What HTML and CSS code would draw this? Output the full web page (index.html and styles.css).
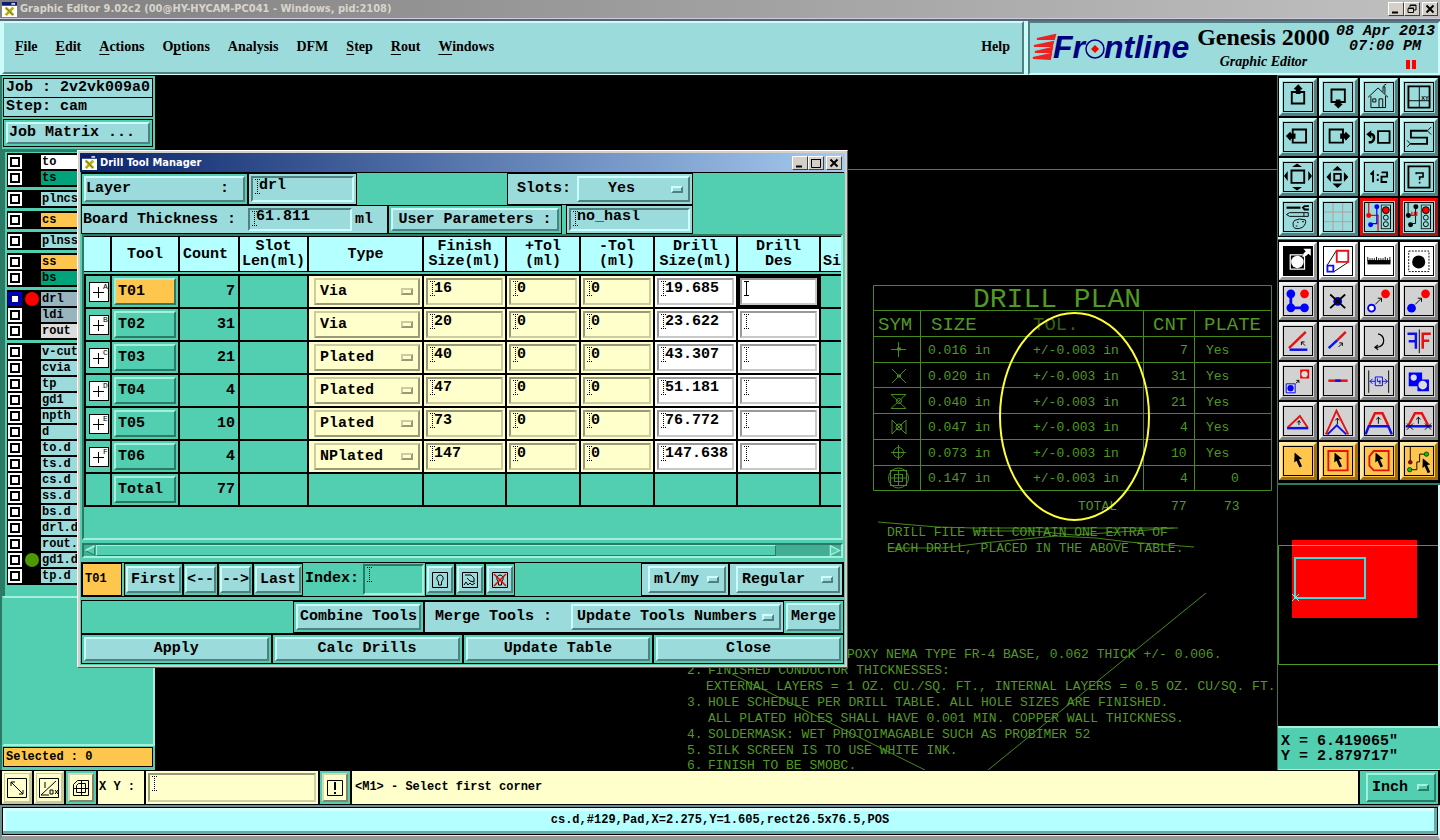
FILE: index.html
```html
<!DOCTYPE html>
<html lang="en">
<head>
<meta charset="utf-8">
<title>Graphic Editor 9.02c2</title>
<link rel="stylesheet" href="styles.css">
</head>
<body>
<svg class="defs" aria-hidden="true">
  <defs>
    <symbol id="app" viewBox="0 0 16 16"><rect width="16" height="16" fill="#fff"/><rect width="16" height="4" fill="#0a1a70"/><path d="M10 1h4v2h-4z" fill="#ccc"/><path d="M4 6l8 8M12 6l-8 8" stroke="#b8b000" stroke-width="3"/><path d="M4 6l8 8" stroke="#666" stroke-width="1"/></symbol>
    <symbol id="cursor" viewBox="0 0 30 52"><path d="M2 0l24 20-10 2 10 22-8 4-10-22-7 6z" fill="#000"/></symbol>
    <symbol id="light" viewBox="0 0 32 80"><rect x="1" y="1" width="30" height="77" fill="none" stroke="#000" stroke-width="3"/><circle cx="16" cy="18" r="11" fill="#f00" stroke="#000" stroke-width="3"/><circle cx="16" cy="42" r="8" fill="none" stroke="#000" stroke-width="3"/><circle cx="16" cy="63" r="8" fill="none" stroke="#000" stroke-width="3"/></symbol>
    <symbol id="cross" viewBox="0 0 20 20"><rect x=".5" y=".5" width="19" height="19" fill="#fff" stroke="#000"/><path d="M4 10.500h11M9.500 5v11" stroke="#000"/></symbol>
  </defs>
</svg>

<header class="titlebar">
  <svg class="app-icon"><use href="#app"/></svg>
  <h1>Graphic Editor 9.02c2 (00@HY-HYCAM-PC041 - Windows, pid:2108)</h1>
  <div class="winbtns">
    <button aria-label="Minimize"><svg viewBox="0 0 12 10"><path d="M2 8.500h6" stroke="#000" stroke-width="2"/></svg></button>
    <button aria-label="Restore"><svg viewBox="0 0 12 10"><path d="M4 3V1h6v5H8M4 1.500h6M2 4.500h5.500v4H2zM2 4h6" fill="none" stroke="#000"/></svg></button>
    <button class="x" aria-label="Close window"><svg viewBox="0 0 12 10"><path d="M2.500 1.500l7 7M9.500 1.500l-7 7" stroke="#000" stroke-width="2"/></svg></button>
  </div>
</header>

<div class="top">
  <nav class="menubar">
    <button><u>F</u>ile</button><button><u>E</u>dit</button><button><u>A</u>ctions</button><button>O<u>p</u>tions</button><button>Analysis</button><button>DFM</button><button><u>S</u>tep</button><button><u>R</u>out</button><button><u>W</u>indows</button>
    <button class="help">Help</button>
  </nav>
  <div class="brand">
    <svg class="logo" viewBox="0 0 160 40" role="img" aria-label="Frontline">
      <path d="M22 8L4 12l17 0zM20 15L1 19l18 0zM19 21L2 25l16 0zM18 27L0 31l17 1z" fill="#e22" stroke="#e22" stroke-width="2"/>
      <text x="20" y="31">Fr</text><text x="71" y="31">ntline</text>
      <circle cx="62" cy="22" r="9" fill="none" stroke="#000080" stroke-width="1.500"/><path d="M62 18l4 4-4 4-4-4z" fill="#f00"/>
    </svg>
    <div class="product"><strong>Genesis 2000</strong><em>Graphic Editor</em></div>
    <div class="clock"><time>08 Apr 2013</time><time class="hour">07:00 PM</time><span class="pause"></span></div>
  </div>
</div>

<main class="main">
  <aside class="side">
    <section class="job">
      <p>Job : 2v2vk009a0</p>
      <p>Step: cam</p>
      <div class="matrix"><button>Job Matrix ...</button></div>
    </section>
    <section class="layers">
      <div class="grp"><label class="w"><input type="checkbox"><i></i>to</label><label class="g"><input type="checkbox"><i></i>ts</label></div>
      <div class="grp"><label><input type="checkbox"><i></i>plncs</label></div>
      <div class="grp"><label class="o"><input type="checkbox"><i></i>cs</label></div>
      <div class="grp"><label><input type="checkbox"><i></i>plnss</label></div>
      <div class="grp"><label class="o"><input type="checkbox"><i></i>ss</label><label class="g"><input type="checkbox"><i></i>bs</label></div>
      <div class="grp"><label class="s"><input type="checkbox" checked><i class="red"></i>drl</label><label class="s"><input type="checkbox"><i></i>ldi</label><label class="l"><input type="checkbox"><i></i>rout</label></div>
      <div class="grp"><label><input type="checkbox"><i></i>v-cut</label><label><input type="checkbox"><i></i>cvia</label><label><input type="checkbox"><i></i>tp</label><label><input type="checkbox"><i></i>gd1</label><label><input type="checkbox"><i></i>npth</label><label><input type="checkbox"><i></i>d</label><label><input type="checkbox"><i></i>to.d</label><label><input type="checkbox"><i></i>ts.d</label><label><input type="checkbox"><i></i>cs.d</label><label><input type="checkbox"><i></i>ss.d</label><label><input type="checkbox"><i></i>bs.d</label><label><input type="checkbox"><i></i>drl.d</label><label><input type="checkbox"><i></i>rout.d</label><label><input type="checkbox"><i class="green"></i>gd1.d</label><label><input type="checkbox"><i></i>tp.d</label></div>
    </section>
    <div class="blank"></div>
    <p class="selected">Selected : 0</p>
  </aside>

  <svg class="canvas" role="img" aria-label="Drill plan drawing">
    <g transform="translate(-155 -75)">
      <g class="ln">
        <path d="M155 169.500H1280"/>
        <path d="M873.500 285.500h398v205h-398zM873 310.500h399M873 336.500h399M873 362.500h399M873 387.500h399M873 413.500h399M873 439.500h399M873 465.500h399M920.500 310v180M1143.500 310v180M1194.500 310v180"/>
        <path d="M891 349.500h15M898.500 342v15M892 369l14 14M906 369l-14 14"/>
        <path d="M897 376h4M897 349h4" stroke-width="3"/>
        <path d="M891 394.500h15l-15 14h15zM892 420v14l14-14v14z"/>
        <circle cx="899" cy="401" r="2.500"/><circle cx="899" cy="427" r="3"/><circle cx="898.500" cy="452.500" r="5"/>
        <path d="M891 452.500h15M898.500 445v15"/>
        <circle cx="898.500" cy="478" r="10"/><rect x="890.500" y="470.500" width="16" height="15"/><rect x="894.500" y="474.500" width="8" height="7"/><path d="M891 478h15M898.500 471v14"/>
        <path d="M878 522L937 527 973 528H1178M974 531h60l40 4 60-4 40-3M888 548h55l40-5 73-7 40 2 33 4 65 5"/>
        <path d="M1206 593L988 770M732 674l193 96"/>
      </g>
      <text class="t28" x="973" y="307">DRILL PLAN</text>
      <g class="t20"><text x="878" y="330">SYM</text><text x="931" y="330">SIZE</text><text class="dim" x="1033" y="330">TOL.</text><text x="1153" y="330">CNT</text><text x="1204" y="330">PLATE</text></g>
      <g class="t13">
        <text x="928" y="354">0.016 in</text><text x="1033" y="354">+/-0.003 in</text><text x="1180" y="354">7</text><text x="1206" y="354">Yes</text>
        <text x="928" y="380">0.020 in</text><text x="1033" y="380">+/-0.003 in</text><text x="1171" y="380">31</text><text x="1206" y="380">Yes</text>
        <text x="928" y="406">0.040 in</text><text x="1033" y="406">+/-0.003 in</text><text x="1171" y="406">21</text><text x="1206" y="406">Yes</text>
        <text x="928" y="431">0.047 in</text><text x="1033" y="431">+/-0.003 in</text><text x="1180" y="431">4</text><text x="1206" y="431">Yes</text>
        <text x="928" y="457">0.073 in</text><text x="1033" y="457">+/-0.003 in</text><text x="1171" y="457">10</text><text x="1206" y="457">Yes</text>
        <text x="928" y="482">0.147 in</text><text x="1033" y="482">+/-0.003 in</text><text x="1180" y="482">4</text><text x="1231" y="482">0</text>
        <text x="1078" y="510">TOTAL</text><text x="1171" y="510">77</text><text x="1224" y="510">73</text>
        <text x="887" y="536">DRILL FILE WILL CONTAIN ONE EXTRA OF</text>
        <text x="887" y="552">EACH DRILL, PLACED IN THE ABOVE TABLE.</text>
        <text x="847" y="658">POXY NEMA TYPE FR-4 BASE, 0.062 THICK +/- 0.006.</text>
        <text x="687" y="674">2.</text><text x="708" y="674">FINISHED CONDUCTOR THICKNESSES:</text>
        <text x="706" y="690">EXTERNAL LAYERS = 1 OZ. CU./SQ. FT., INTERNAL LAYERS = 0.5 OZ. CU/SQ. FT.</text>
        <text x="687" y="706">3.</text><text x="708" y="706">HOLE SCHEDULE PER DRILL TABLE. ALL HOLE SIZES ARE FINISHED.</text>
        <text x="708" y="722">ALL PLATED HOLES SHALL HAVE 0.001 MIN. COPPER WALL THICKNESS.</text>
        <text x="687" y="738">4.</text><text x="708" y="738">SOLDERMASK: WET PHOTOIMAGABLE SUCH AS PROBIMER 52</text>
        <text x="687" y="754">5.</text><text x="708" y="754">SILK SCREEN IS TO USE WHITE INK.</text>
        <text x="687" y="769">6.</text><text x="708" y="769">FINISH TO BE SMOBC.</text>
      </g>
      <ellipse cx="1074.500" cy="416.500" rx="74.500" ry="103.500" fill="none" stroke="#ffff33" stroke-width="2"/>
    </g>
  </svg>

  <aside class="tools">
    <div class="pad">
      <button aria-label="Pan up"><svg viewBox="0 0 90 90"><path d="M25 29h40v37H25z" class="k6"/><path d="M46 4l14 15-7 3v13H38V22l-7-3z"/></svg></button>
      <button aria-label="Pan down"><svg viewBox="0 0 90 90"><path d="M24 21h43v40H24z" class="k6"/><path d="M46 82L32 68l6-4V53h15v11l7 4z"/></svg></button>
      <button aria-label="Home"><svg viewBox="0 0 90 90"><path d="M10 46l32-30 32 30M19 42v37h47V42M45 79V51h12v28M25 51h10v10H25zM58 28V12h6v22M60 8l8-4" class="k3"/></svg></button>
      <button aria-label="Zoom area"><svg viewBox="0 0 90 90"><path d="M11 11h68v68H11z" class="k6"/><path d="M46 12v66M12 57h66" class="k3"/><text x="52" y="54">XY</text></svg></button>
      <button aria-label="Pan left"><svg viewBox="0 0 90 90"><path d="M28 21h43v42H28z" class="k6"/><path d="M6 42l14-14 3 6h14v17H23l-3 6z"/></svg></button>
      <button aria-label="Pan right"><svg viewBox="0 0 90 90"><path d="M18 21h43v42H18z" class="k6"/><path d="M84 42L70 28l-3 6H52v17h15l3 6z"/></svg></button>
      <button aria-label="Previous view"><svg viewBox="0 0 90 90"><path d="M42 26h37v38H42z" class="k6"/><path d="M14 36h8q7 2 7 12t-10 14H12" fill="none" stroke="#000" stroke-width="8"/><path d="M4 36l16-13v27z"/></svg></button>
      <button aria-label="Route view"><svg viewBox="0 0 90 90"><path d="M72 25H19v22h52v20H17" class="k6"/><path d="M72 25l12-12M72 25l12 12M17 67L7 56M17 67L7 77" class="k3"/></svg></button>
      <button aria-label="Zoom out"><svg viewBox="0 0 90 90"><path d="M24 24h41v40H24z" class="k6"/><path d="M42 2l16 11H26zM42 88l16-11H26zM0 42l12-16v32zM90 42L78 26v32z"/></svg></button>
      <button aria-label="Zoom in"><svg viewBox="0 0 90 90"><path d="M33 35h21v21H33z" class="k6"/><path d="M43 10l16 14H27zM43 80l16-14H27zM8 45l14-16v32zM78 45L64 29v32z"/></svg></button>
      <button aria-label="Scale one to two"><svg viewBox="0 0 90 90"><path d="M18 37l8-8v33M53 30h18v14H53v17h18M41 35v7M41 51v7" class="k6"/></svg></button>
      <button aria-label="Help on tool"><svg viewBox="0 0 90 90"><path d="M11 11h68v68H11z" class="k6"/><path d="M36 36v-4h22v13H47v10M47 60v6" class="k5"/></svg></button>
      <button aria-label="Settings"><svg viewBox="0 0 90 90"><path d="M8 15h45" stroke="#000" stroke-width="7"/><path d="M80 10H66l-5 5 5 6h14" class="k6"/><path d="M8 37l10-6h60v12H18zM64 31v12" class="k3"/><path d="M34 56q14-8 34-2 6 10-8 24-22 10-30-2-4-14 4-20zM58 60h6M42 62h5M38 74h5" class="k3"/></svg></button>
      <button aria-label="Grid"><svg viewBox="0 0 90 90"><path d="M29 0v90M60 0v90M0 29h90M0 60h90" fill="none" stroke="#b99" stroke-width="3"/></svg></button>
      <button class="hot" aria-label="Connected nets"><svg viewBox="0 0 90 90"><path d="M12 0v40h30v50" fill="none" stroke="#f00" stroke-width="4"/><path d="M38 12v54H20" fill="none" stroke="#00f" stroke-width="4"/><circle cx="38" cy="12" r="8" fill="#00f"/><circle cx="18" cy="70" r="8" fill="#00f"/><circle cx="12" cy="40" r="8" fill="#f00"/><use href="#light" x="50" y="5" width="34" height="80"/></svg></button>
      <button class="hot" aria-label="Net check"><svg viewBox="0 0 90 90"><path d="M10 0v40M34 12v54H20" class="k3"/><path d="M10 40h28M22 40V28M30 40V28M38 40V28" fill="none" stroke="#f00" stroke-width="4"/><circle cx="35" cy="12" r="8"/><circle cx="18" cy="70" r="8"/><circle cx="11" cy="40" r="8"/><use href="#light" x="50" y="5" width="34" height="80"/></svg></button>
    </div>
    <div class="pad gray">
      <button class="white" aria-label="Negative move"><svg viewBox="0 0 90 90"><path d="M0 0h90v90H0z"/><path d="M20 25h46v46H20zM60 32l20-22" fill="none" stroke="#fff" stroke-width="4"/><circle cx="43" cy="48" r="20" fill="#fff"/><path d="M62 6h24v22l-8-6-8 8-8-8 8-8z" fill="#fff"/></svg></button>
      <button class="white" aria-label="Resize"><svg viewBox="0 0 90 90"><path d="M10 59L40 11M31 80l47-31" class="k2"/><path d="M41 12h37v36H41z" class="r"/><path d="M11 60h19v19H11z" class="b"/></svg></button>
      <button class="white" aria-label="Measure"><svg viewBox="0 0 90 90"><path d="M8 42h74v14H8z"/><path d="M9 46V32M16 46V36M23 46V36M30 46V36M37 46V32M44 46V36M51 46V36M58 46V36M65 46V32M72 46V36M80 46V32" class="k3"/></svg></button>
      <button class="white" aria-label="Select area"><svg viewBox="0 0 90 90"><path d="M12 13h65v66H12z" class="k3" stroke-dasharray="6 4"/><circle cx="44" cy="48" r="21"/></svg></button>
      <button aria-label="Add pads"><svg viewBox="0 0 90 90"><path d="M22 22v45h44" fill="none" stroke="#00f" stroke-width="9"/><g fill="#00f"><circle cx="22" cy="22" r="14"/><circle cx="22" cy="67" r="14"/><circle cx="66" cy="67" r="14"/></g><circle cx="66" cy="22" r="14" fill="#f00"/></svg></button>
      <button aria-label="Delete"><svg viewBox="0 0 90 90"><circle cx="44" cy="46" r="14" fill="#00c"/><path d="M20 24l48 44M68 24L20 68" class="k6"/></svg></button>
      <button aria-label="Move"><svg viewBox="0 0 90 90"><circle cx="66" cy="22" r="14" fill="#f00"/><circle cx="21" cy="68" r="11" fill="#fff" stroke="#00f" stroke-width="6"/><path d="M33 56l20-20M41 36h12v12" class="k3"/></svg></button>
      <button aria-label="Copy"><svg viewBox="0 0 90 90"><circle cx="66" cy="22" r="14" fill="#f00"/><circle cx="21" cy="68" r="14" fill="#00f"/><path d="M33 56l20-20M41 36h12v12" class="k3"/></svg></button>
      <button aria-label="Rotate line"><svg viewBox="0 0 90 90"><path d="M70 16L16 68" class="r7"/><path d="M18 73h57" class="b7"/><path d="M68 60L56 48M56 58V48h10" class="k3"/></svg></button>
      <button aria-label="Extend line"><svg viewBox="0 0 90 90"><path d="M70 16L43 42" class="r7"/><path d="M43 42L15 68" class="b7"/><path d="M47 64l12-12M49 51h10v10" class="k3"/></svg></button>
      <button aria-label="Rotate"><svg viewBox="0 0 90 90"><path d="M42 22q18 4 18 22T36 66M42 58l-10 7 10 8" class="k4"/></svg></button>
      <button aria-label="Mirror"><svg viewBox="0 0 90 90"><path d="M46 8v76" class="k3"/><path d="M8 22h27v48M12 46h22" class="b7"/><path d="M83 22H57v48M78 44H58" class="r7"/></svg></button>
      <button aria-label="Replace symbol"><svg viewBox="0 0 90 90"><path d="M52 8h29v29H52z" fill="#f00"/><circle cx="66" cy="23" r="10" fill="#ddd"/><path d="M7 54h29v29H7z" fill="none" stroke="#00f" stroke-width="3"/><circle cx="21" cy="68" r="10" fill="#00f"/><path d="M38 52l10-8M40 43h8v8" class="k3"/></svg></button>
      <button aria-label="Split line"><svg viewBox="0 0 90 90"><path d="M14 44h62" class="r7"/><path d="M36 44h18" class="b7"/></svg></button>
      <button aria-label="Spacing"><svg viewBox="0 0 90 90"><path d="M12 11v72M76 11v72" class="k3"/><path d="M16 46h17v-14h23v28H33V46M56 46h16M24 38l-8 8 8 8M64 38l8 8-8 8M40 37v10h10M48 42v13" fill="none" stroke="#00f" stroke-width="3"/></svg></button>
      <button aria-label="Merge pads"><svg viewBox="0 0 90 90"><path d="M12 18h43v22h22v38H40V62H12z" fill="#00f"/><circle cx="28" cy="34" r="10" fill="#ddd"/><circle cx="57" cy="58" r="14" fill="#ddd"/></svg></button>
      <button aria-label="Move triangle"><svg viewBox="0 0 90 90"><path d="M12 66l39-37 25 37" class="r"/><path d="M10 68h68" class="b7"/><path d="M48 58V44M42 50l6-6 6 6" class="k3"/></svg></button>
      <button aria-label="Stretch corner"><svg viewBox="0 0 90 90"><path d="M6 88l34-76 38 76" class="r"/><path d="M11 88l30-29 31 29" class="b"/><path d="M43 56V36M36 43l7-7 7 7" class="k3"/></svg></button>
      <button aria-label="Stretch line"><svg viewBox="0 0 90 90"><path d="M14 58l18-38h24l18 38" class="r7"/><path d="M2 88l10-26h63l11 26" class="b7"/><path d="M43 54V33M36 40l7-7 7 7" class="k3"/></svg></button>
      <button aria-label="Trim line"><svg viewBox="0 0 90 90"><path d="M12 58l20-38h22l20 38" class="r7"/><path d="M2 62h84" class="b7"/><path d="M43 54V33M36 40l7-7 7 7M6 53l20 20M26 53L6 73M64 53l20 20M84 53L64 73" class="k3"/></svg></button>
      <button class="orange" aria-label="Select"><svg viewBox="0 0 90 90"><use href="#cursor" x="32" y="18" width="30" height="52"/></svg></button>
      <button class="orange" aria-label="Select rectangle"><svg viewBox="0 0 90 90"><path d="M14 13h62v62H14z" class="r"/><use href="#cursor" x="32" y="18" width="30" height="52"/></svg></button>
      <button class="orange" aria-label="Select polygon"><svg viewBox="0 0 90 90"><path d="M28 13h48v62H28L14 60V30z" class="r"/><use href="#cursor" x="32" y="18" width="30" height="52"/></svg></button>
      <button class="orange" aria-label="Select net"><svg viewBox="0 0 90 90"><path d="M17 0v48M16 73h22V48h9V23h20" class="k3"/><circle cx="17" cy="49" r="6" fill="#b00" stroke="#000" stroke-width="2"/><g fill="#0c0" stroke="#000" stroke-width="2"><circle cx="69" cy="23" r="7"/><circle cx="15" cy="73" r="7"/></g><use href="#cursor" x="55" y="36" width="30" height="52"/></svg></button>
    </div>
    <svg class="map" role="img" aria-label="Overview">
      <rect x="14" y="55" width="125" height="78" fill="#f00"/>
      <path d="M170 60.500H.500V179.500H170" fill="none" stroke="#4f9a20"/><path d="M14 60.500h125" stroke="#f80"/>
      <rect x="17" y="73" width="70" height="40" fill="none" stroke="#3ce0e0" stroke-width="2"/><path d="M14 109l7 7M21 109l-7 7" stroke="#6ff"/>
    </svg>
    <div class="coords"><p>X = 6.419065"</p><p>Y = 2.879717"</p></div>
  </aside>
</main>

<div class="prompt">
  <button class="pb" aria-label="Snap line"><svg viewBox="0 0 20 20"><path d="M.500 .500h19v19H.500zM4 4l12 12M4 8V4h4M12 16h4v-4" fill="none" stroke="#000"/></svg></button>
  <button class="pb" aria-label="Snap ratio"><svg viewBox="0 0 20 20"><path d="M.500 .500h19v19H.500zM2 17L17 3M6 4v6M2 17h8M11 12h3v4h-3zM16 12l3 4M19 12l-3 4" fill="none" stroke="#000"/></svg></button>
  <button class="pb teal" aria-label="Grid snap"><svg viewBox="0 0 20 20"><path d="M2.500 6.500l4-4h11v15h-15zM5.500 7.500l2-2h7v9h-9zM10.500 2v16M2 10.500h16" fill="none" stroke="#000"/></svg></button>
  <label class="xy" for="xy">X Y :</label>
  <span class="field xyf"><input id="xy" type="text"></span>
  <button class="pb teal" aria-label="Interrupt"><svg viewBox="0 0 20 20"><path d="M2.500 2.500h15v15h-15z" fill="none" stroke="#000"/><path d="M10 4v8M10 14v2" stroke="#000" stroke-width="2"/></svg></button>
  <p class="msg">&lt;M1&gt; - Select first corner</p>
  <div class="unit"><span class="opt"><select aria-label="Units"><option>Inch</option></select><i></i></span></div>
</div>
<footer class="status"><p>cs.d,#129,Pad,X=2.275,Y=1.605,rect26.5x76.5,POS</p></footer>

<section class="dialog" role="dialog" aria-label="Drill Tool Manager">
  <header class="dbar">
    <svg class="app-icon"><use href="#app"/></svg>
    <h2>Drill Tool Manager</h2>
    <div class="winbtns">
      <button aria-label="Minimize dialog"><svg viewBox="0 0 12 10"><path d="M2 8.500h6" stroke="#000" stroke-width="2"/></svg></button>
      <button aria-label="Maximize dialog"><svg viewBox="0 0 12 10"><path d="M1.500 1.500h9v8h-9zM1 1.500h10" fill="none" stroke="#000"/></svg></button>
      <button class="x" aria-label="Close dialog"><svg viewBox="0 0 12 10"><path d="M2.500 1.500l7 7M9.500 1.500l-7 7" stroke="#000" stroke-width="2"/></svg></button>
    </div>
  </header>
  <div class="dbody">
    <div class="row r1">
      <div class="box w-layer"><button class="bv spread"><span>Layer</span><span>:</span></button></div>
      <div class="box lt w-in"><span class="field"><input type="text" value="drl" aria-label="Layer name"></span></div>
      <div class="fill"></div>
      <div class="box lt w-slots"><label for="slots">Slots:</label><span class="opt center"><select id="slots"><option>Yes</option></select><i></i></span></div>
    </div>
    <div class="row r2">
      <div class="box lt w-thick"><label for="thick">Board Thickness :</label><span class="field"><input id="thick" type="text" value="61.811"></span><span>ml</span></div>
      <div class="box w-user"><button class="bv">User Parameters :</button></div>
      <div class="box lt w-hasl"><span class="field"><input type="text" value="no_hasl" aria-label="User parameters"></span></div>
    </div>
    <div class="view">
      <table>
        <colgroup><col class="c28"><col class="c68"><col class="c60"><col class="c69"><col class="c115"><col class="c83"><col class="c74"><col class="c74"><col class="c83"><col class="c83"><col class="c83"></colgroup>
        <thead><tr><th></th><th>Tool</th><th class="lft">Count</th><th>Slot<br>Len(ml)</th><th>Type</th><th>Finish<br>Size(ml)</th><th>+Tol<br>(ml)</th><th>-Tol<br>(ml)</th><th>Drill<br>Size(ml)</th><th>Drill<br>Des</th><th class="cut"><br>Si</th></tr></thead>
        <tbody>
          <tr class="gap"><td colspan="11"></td></tr>
          <tr><td><svg class="sym"><use href="#cross"/><text x="14" y="7">A</text></svg></td><td><button class="tl on">T01</button></td><td class="n">7</td><td></td><td class="y"><span class="opt"><select aria-label="T01 type"><option>Via</option></select><i></i></span></td><td class="y"><span class="field"><input value="16" aria-label="T01 finish"></span></td><td class="y"><span class="field"><input value="0" aria-label="T01 plus"></span></td><td class="y"><span class="field"><input value="0" aria-label="T01 minus"></span></td><td class="wh"><span class="field"><input value="19.685" aria-label="T01 drill"></span></td><td class="wh act"><span class="field"><input aria-label="T01 des"></span></td><td></td></tr>
          <tr><td><svg class="sym"><use href="#cross"/><text x="14" y="7">B</text></svg></td><td><button class="tl">T02</button></td><td class="n">31</td><td></td><td class="y"><span class="opt"><select aria-label="T02 type"><option>Via</option></select><i></i></span></td><td class="y"><span class="field"><input value="20" aria-label="T02 finish"></span></td><td class="y"><span class="field"><input value="0" aria-label="T02 plus"></span></td><td class="y"><span class="field"><input value="0" aria-label="T02 minus"></span></td><td class="wh"><span class="field"><input value="23.622" aria-label="T02 drill"></span></td><td class="wh"><span class="field"><input aria-label="T02 des"></span></td><td></td></tr>
          <tr><td><svg class="sym"><use href="#cross"/><text x="14" y="7">C</text></svg></td><td><button class="tl">T03</button></td><td class="n">21</td><td></td><td class="y"><span class="opt"><select aria-label="T03 type"><option>Plated</option></select><i></i></span></td><td class="y"><span class="field"><input value="40" aria-label="T03 finish"></span></td><td class="y"><span class="field"><input value="0" aria-label="T03 plus"></span></td><td class="y"><span class="field"><input value="0" aria-label="T03 minus"></span></td><td class="wh"><span class="field"><input value="43.307" aria-label="T03 drill"></span></td><td class="wh"><span class="field"><input aria-label="T03 des"></span></td><td></td></tr>
          <tr><td><svg class="sym"><use href="#cross"/><text x="14" y="7">D</text></svg></td><td><button class="tl">T04</button></td><td class="n">4</td><td></td><td class="y"><span class="opt"><select aria-label="T04 type"><option>Plated</option></select><i></i></span></td><td class="y"><span class="field"><input value="47" aria-label="T04 finish"></span></td><td class="y"><span class="field"><input value="0" aria-label="T04 plus"></span></td><td class="y"><span class="field"><input value="0" aria-label="T04 minus"></span></td><td class="wh"><span class="field"><input value="51.181" aria-label="T04 drill"></span></td><td class="wh"><span class="field"><input aria-label="T04 des"></span></td><td></td></tr>
          <tr><td><svg class="sym"><use href="#cross"/><text x="14" y="7">E</text></svg></td><td><button class="tl">T05</button></td><td class="n">10</td><td></td><td class="y"><span class="opt"><select aria-label="T05 type"><option>Plated</option></select><i></i></span></td><td class="y"><span class="field"><input value="73" aria-label="T05 finish"></span></td><td class="y"><span class="field"><input value="0" aria-label="T05 plus"></span></td><td class="y"><span class="field"><input value="0" aria-label="T05 minus"></span></td><td class="wh"><span class="field"><input value="76.772" aria-label="T05 drill"></span></td><td class="wh"><span class="field"><input aria-label="T05 des"></span></td><td></td></tr>
          <tr><td><svg class="sym"><use href="#cross"/><text x="14" y="7">F</text></svg></td><td><button class="tl">T06</button></td><td class="n">4</td><td></td><td class="y"><span class="opt"><select aria-label="T06 type"><option>NPlated</option></select><i></i></span></td><td class="y"><span class="field"><input value="147" aria-label="T06 finish"></span></td><td class="y"><span class="field"><input value="0" aria-label="T06 plus"></span></td><td class="y"><span class="field"><input value="0" aria-label="T06 minus"></span></td><td class="wh"><span class="field"><input value="147.638" aria-label="T06 drill"></span></td><td class="wh"><span class="field"><input aria-label="T06 des"></span></td><td></td></tr>
          <tr><td></td><td><button class="tl">Total</button></td><td class="n">77</td><td></td><td></td><td></td><td></td><td></td><td></td><td></td><td></td></tr>
        </tbody>
      </table>
    </div>
    <div class="scroll"><svg viewBox="0 0 12 12"><path d="M11 1L1 6l10 5z" fill="#52ceb0" stroke="#2a7a66"/><path d="M11 1L1 6" stroke="#a8f0dc" stroke-width="2"/></svg><span class="thumb"></span><span class="trough"></span><svg viewBox="0 0 12 12"><path d="M1 1l10 5-10 5z" fill="#52ceb0" stroke="#a8f0dc" stroke-width="1.500"/></svg></div>
    <div class="row nav">
      <output class="cur">T01</output>
      <div class="box"><button class="bv">First</button></div><div class="box"><button class="bv arr">&lt;--</button></div><div class="box"><button class="bv arr">--&gt;</button></div><div class="box"><button class="bv">Last</button></div>
      <label class="idx" for="idx">Index:</label><span class="field idxf"><input id="idx" type="text"></span>
      <div class="box ib"><button class="bv" aria-label="Highlight"><svg viewBox="0 0 16 16"><path d="M.500 .500h15v15H.500zM6.500 10Q4 7 5 5t3-2 3 2-1.500 5v3h-3z" fill="none" stroke="#000"/></svg></button></div><div class="box ib"><button class="bv" aria-label="Redraw"><svg viewBox="0 0 16 16"><path d="M.500 .500h15v15H.500zM3 3h6l3 3v4l-4-1-3-3M2 13l2-3 2 3 2-2 2 2 3-2" fill="none" stroke="#000"/></svg></button></div><div class="box ib"><button class="bv" aria-label="Clear highlight"><svg viewBox="0 0 16 16"><path d="M.500 .500h15v15H.500zM6.500 10Q4 7 5 5t3-2 3 2-1.500 5v3h-3z" fill="none" stroke="#000"/><path d="M2 2l12 12M14 2L2 14" stroke="#e00" stroke-width="1.500"/></svg></button></div>
      <div class="fill"></div>
      <div class="box lt w-ml"><span class="opt"><select aria-label="Display units"><option>ml/my</option></select><i></i></span></div>
      <div class="box lt w-reg"><span class="opt"><select aria-label="Mode"><option>Regular</option></select><i></i></span></div>
    </div>
    <div class="row mrg">
      <div class="fill"></div>
      <div class="box"><button class="bv comb">Combine Tools</button></div>
      <div class="box lt w-mt"><label for="mt">Merge Tools :</label><span class="opt"><select id="mt"><option>Update Tools Numbers</option></select><i></i></span></div>
      <div class="mb"><button class="bv">Merge</button></div>
    </div>
    <div class="row acts"><div class="box"><button class="bv">Apply</button></div><div class="box"><button class="bv">Calc Drills</button></div><div class="box"><button class="bv">Update Table</button></div><div class="box"><button class="bv">Close</button></div></div>
  </div>
</section>
</body>
</html>
```
FILE: styles.css
```css
:root {
  --teal: #52ceb0;
  --teal-hi: #a4f0dc;
  --teal-lo: #2a7a66;
  --cyan: #9bdbdb;
  --cyan-hi: #ccfcfa;
  --cyan-lo: #527f7f;
  --pale: #b4ffff;
  --cream: #ffffcc;
  --orange: #ffc64e;
  --mono: "Liberation Mono", "DejaVu Sans Mono", monospace;
}
* { box-sizing: border-box; }
body {
  margin: 0;
  min-height: 100vh;
  display: flex;
  flex-direction: column;
  background: #000;
  color: #000;
  font: bold 15px/16px var(--mono);
  position: relative;
  overflow: hidden;
}
p, h1, h2 { margin: 0; }
button, input, select {
  font: inherit;
  color: inherit;
  margin: 0;
  padding: 0;
  background: none;
  border: 0;
  border-radius: 0;
  appearance: none;
  min-width: 0;
}
.defs { position: absolute; width: 0; height: 0; }

/* window title bars */
.titlebar, .dbar {
  display: flex;
  align-items: center;
  gap: 3px;
}
.titlebar {
  height: 19px;
  padding: 0 2px;
  background: linear-gradient(90deg, #808080, #c0c0c0);
  color: #d8d4cc;
  border-bottom: 1px solid #ccd;
}
.titlebar h1, .dbar h2 {
  flex: 1;
  font: bold 11px/16px "DejaVu Sans Condensed", "DejaVu Sans", sans-serif;
}
.app-icon { width: 15px; height: 15px; }
.winbtns { display: flex; }
.winbtns button {
  width: 16px;
  height: 14px;
  background: #d4d0c8;
  border: 1px solid;
  border-color: #fff #404040 #404040 #fff;
  display: grid;
  place-items: center;
}
.winbtns .x { margin-left: 2px; }
.winbtns svg { width: 12px; height: 10px; }

/* menu bar and branding */
.top { display: flex; height: 56px; border-top: 2px solid #567; background: var(--cyan-hi); gap: 4px; }
.menubar, .brand { background: var(--cyan); border: 2px solid; }
.menubar {
  flex: 1;
  display: flex;
  align-items: center;
  gap: 18px;
  padding: 0 12px 2px 11px;
  border-color: var(--cyan-hi) var(--cyan-lo) var(--cyan-lo) var(--cyan-hi);
  margin: 0 0 1px 2px;
}
.menubar button { font: bold 14px/18px "Liberation Serif", serif; }
.menubar u { text-underline-offset: 3px; }
.menubar .help { margin-left: auto; }
.brand {
  width: 412px;
  display: flex;
  padding: 0 0 0 3px;
  gap: 2px;
  border-color: var(--cyan-lo) var(--cyan-hi) var(--cyan-hi) var(--cyan-lo);
}
.logo { width: 160px; height: 40px; margin-top: 4px; flex: none; overflow: visible; }
.logo text { font: italic bold 32px "Liberation Sans", Arial, sans-serif; fill: #000080; }
.product { width: 137px; display: flex; flex-direction: column; align-items: center; white-space: nowrap; font-family: "Liberation Serif", serif; }
.product strong { font-size: 24px; line-height: 28px; }
.product em { font-size: 14px; line-height: 22px; }
.clock { flex: 1; display: flex; flex-direction: column; align-items: flex-end; font-style: italic; line-height: 15px; white-space: nowrap; padding: 1px 3px 0 0; }
.hour { margin-right: 14px; }
.pause { width: 10px; height: 9px; margin: 6px 19px 0 0; border: solid #f00; border-width: 0 4px; }

/* work area */
.main { flex: 1; display: flex; min-height: 0; }
.side { width: 155px; display: flex; flex-direction: column; background: var(--teal); border-left: 2px solid var(--teal-lo); border-top: 1px solid #000; }
.job { padding: 2px 2px 1px 1px; }
.job p { border: 1px solid #000; background: var(--cyan); height: 20px; line-height: 17px; padding-left: 2px; white-space: nowrap; }
.job p + p { margin-top: -1px; }
.matrix { border: 1px solid #000; margin-top: 2px; padding: 2px; }
.matrix button, .bv {
  background: var(--cyan);
  border: 2px solid;
  border-color: var(--cyan-hi) var(--cyan-lo) var(--cyan-lo) var(--cyan-hi);
}
.matrix button { width: 100%; height: 22px; text-align: left; padding-left: 1px; }
.layers {
  margin-top: 1px;
  border: solid var(--teal-lo);
  border-width: 3px 0 0 3px;
  padding: 1px 1px 11px 2px;
  display: flex;
  flex-direction: column;
  gap: 3px;
  font-size: 12px;
}
.grp { background: #000; padding: 1px 0; }
.grp label {
  --bg: #9bdbdb;
  display: grid;
  grid-template-columns: 15px 19px 1fr;
  height: 16px;
  align-items: center;
  line-height: 14px;
  padding-left: 1px;
  background: linear-gradient(90deg, #000 34px, var(--bg) 34px) 0 1px / 100% 14px no-repeat;
  white-space: nowrap;
}
.grp .w { --bg: #fff; }
.grp .g { --bg: #00a37a; }
.grp .o { --bg: var(--orange); }
.grp .s { --bg: #98b4be; }
.grp .l { --bg: #dcdcdc; }
.grp input { width: 14px; height: 14px; background: #fff; border: 2px solid #fff; box-shadow: inset 0 0 0 2px #000; }
.grp input:checked { border-color: #0000c0; box-shadow: inset 0 0 0 2px #0000a0; }
.grp i { width: 14px; height: 14px; border-radius: 50%; margin-left: 2px; }
.grp .red { background: #f00; }
.grp .green { background: #4c9a00; }
.blank { flex: 1; border: 2px solid; border-color: var(--teal-hi) var(--teal-hi) var(--teal-hi) var(--teal); }
.selected { margin: 1px 2px 3px 1px; border: 1px solid #000; background: var(--orange); font-size: 12px; height: 20px; line-height: 18px; padding-left: 2px; }
.canvas { flex: 1; min-width: 0; display: block; overflow: hidden; }
.ln { fill: none; stroke: #458a1a; }
.canvas text { fill: #4f9a22; font-family: var(--mono); font-weight: normal; white-space: pre; }
.canvas .dim { fill: #30620f; }
.t28 { font-size: 28px; }
.t20 { font-size: 19px; }
.t13 { font-size: 13px; }

/* tool palette */
.tools { width: 163px; display: flex; flex-direction: column; border-left: 1px solid var(--teal-lo); background: #000; }
.pad { display: grid; grid-template-columns: repeat(4, 1fr); gap: 2px; padding: 2px 2px 1px 1px; border-top: 1px solid var(--teal-lo); border-bottom: 2px solid var(--cyan-hi); }
.pad button {
  height: 38px;
  border: 3px solid;
  border-color: var(--cyan-hi) var(--cyan-lo) var(--cyan-lo) var(--cyan-hi);
  background: var(--cyan);
  display: grid;
  place-items: center;
}
.pad svg { width: 30px; height: 30px; border: 1px solid #000; overflow: hidden; }
.pad text { font: bold 18px "Liberation Sans", sans-serif; }
.pad .hot { border-color: #f00 #a01818 #a01818 #f00; }
.pad.gray { border-bottom-color: var(--teal-lo); padding-bottom: 3px; }
.gray button { background: #d2d2d2; border-color: #f0f0f0 #808080 #808080 #f0f0f0; }
.gray .white { background: #fff; border-color: #fff #999 #999 #fff; }
.gray .orange { background: var(--orange); border-color: #ffe9a0 #a07010 #a07010 #ffe9a0; }
.k2, .k3, .k4, .k5, .k6 { fill: none; stroke: #000; stroke-width: 3; }
.k4 { stroke-width: 4; }
.k5 { stroke-width: 5; }
.k6 { stroke-width: 6; }
.r, .r7 { fill: none; stroke: #e81010; stroke-width: 6; }
.b, .b7 { fill: none; stroke: #1010e8; stroke-width: 6; }
.r7, .b7 { stroke-width: 8; }
.map { flex: 1; min-height: 0; width: 100%; display: block; border-right: 2px solid var(--cyan-hi); }
.coords { background: var(--teal); border-top: 2px solid var(--teal-hi); border-bottom: 1px solid var(--teal-hi); height: 44px; padding: 6px 3px; line-height: 15px; }

/* prompt line and status */
.prompt { height: 35px; display: flex; gap: 2px; padding: 1px 2px 1px 2px; background: #000; font-size: 12px; }
.pb { width: 30px; background: var(--cream); border: 2px solid; border-color: var(--cream) #c8c8a0 #c8c8a0 var(--cream); outline: 1px solid #c8c8a0; outline-offset: -3px; display: grid; place-items: center; }
.pb svg { width: 20px; height: 20px; }
.pb.teal { border-color: var(--teal); outline: 2px outset #d8d8b0; outline-offset: -4px; }
.xy { background: var(--cream); width: 46px; line-height: 32px; padding-left: 1px; }
.msg { flex: 1; background: var(--cream); line-height: 32px; padding-left: 3px; }
.unit { width: 78px; display: flex; background: var(--teal); padding: 2px 2px 2px 6px; font-size: 15px; }
.status { height: 35px; background: var(--cyan-hi); border: solid; border-width: 2px 2px 4px; border-color: #6a9090 var(--cyan-hi) #999 #6a9090; font-size: 12px; }
.status p { height: 28px; border: 1px solid #000; background: var(--pale); text-align: center; line-height: 24px; box-shadow: inset -3px -3px 0 #6aa, inset 3px 3px 0 #d8ffff; }

/* drill tool manager */
.dialog { position: absolute; left: 77px; top: 150px; width: 771px; background: #d4d0c8; border: 1px solid; border-color: #fff #555 #555 #fff; padding: 2px; }
.dbar { height: 19px; padding: 0 3px 0 2px; background: linear-gradient(90deg, #0a246a, #a6caf0); color: #fff; }
.dbody { background: var(--teal); padding: 0 1px 1px; }
.row { display: flex; }
.fill { flex: 1; }
.box { border: 1px solid #000; padding: 2px; display: flex; align-items: stretch; }
.box .bv { flex: 1; }
.lt { background: var(--cyan); }
.box .spread { display: flex; justify-content: space-between; align-items: center; padding: 0 14px 0 0; }
.r1 { height: 33px; padding-right: 151px; border-top: 1px solid #000; }
.r2 { height: 29px; padding-right: 151px; }
.w-layer { width: 167px; }
.w-in { width: 109px; }
.w-slots { width: 186px; align-items: center; padding-left: 9px; gap: 6px; }
.w-slots .opt, .w-thick .field { flex: 1; align-self: stretch; }
.w-thick { width: 307px; align-items: center; padding: 2px 14px 2px 1px; gap: 3px; }
.w-thick .field { margin-left: 9px; }
.w-user { width: 174px; margin-right: 4px; }
.w-hasl { flex: 1; }
.field { display: grid; grid-template-rows: 100%; --hi: #cff; --lo: #527f7f; flex: 1; min-width: 0; }
.field input { grid-area: 1 / 1; width: 100%; height: 100%; border: 2px solid; border-color: var(--lo) var(--hi) var(--hi) var(--lo); padding: 0 0 7px 6px; }
.field::before {
  content: "";
  grid-area: 1 / 1;
  width: 5px;
  height: 15px;
  margin: 3px 0 0 4px;
  background:
    repeating-linear-gradient(#000 0 1px, transparent 1px 2px) 2px 0 / 1px 100% no-repeat,
    repeating-linear-gradient(90deg, #000 0 1px, transparent 1px 2px) 0 0 / 5px 1px no-repeat,
    repeating-linear-gradient(90deg, #000 0 1px, transparent 1px 2px) 0 100% / 5px 1px no-repeat;
}
.opt { display: grid; --hi: #cff; --lo: #527f7f; flex: 1; }
.opt select { grid-area: 1 / 1; width: 100%; border: 2px solid; border-color: var(--hi) var(--lo) var(--lo) var(--hi); padding: 0 0 0 4px; height: 100%; }
.opt i { grid-area: 1 / 1; justify-self: end; align-self: center; width: 12px; height: 7px; margin-right: 7px; border: 2px solid; border-color: var(--hi) var(--lo) var(--lo) var(--hi); pointer-events: none; }
.center select { padding-left: 29px; }
.prompt .opt { --hi: var(--teal-hi); --lo: var(--teal-lo); }
.prompt .xyf { flex: 0 0 172px; background: var(--cream); padding: 2px; --hi: #d0d0a8; --lo: #99997a; }

.view { height: 306px; overflow: hidden; border: 2px solid; border-color: var(--teal-lo) var(--teal-hi) var(--teal-hi) var(--teal-lo); margin: 0 1px; }
table { table-layout: fixed; width: 820px; border-collapse: separate; border-spacing: 0; }
.c28 { width: 28px; } .c68 { width: 68px; } .c60 { width: 60px; } .c69 { width: 69px; }
.c115 { width: 115px; } .c83 { width: 83px; } .c74 { width: 74px; }
th { background: var(--pale); height: 36px; padding: 0; border: solid #000; border-width: 1px 2px 1px 0; line-height: 15px; white-space: nowrap; }
th.lft { text-align: left; padding-left: 3px; }
th.cut { text-align: left; padding-left: 2px; }
td { height: 33px; padding: 2px; border: solid #000; border-width: 0 2px 2px 0; }
td:first-child { border-left: 2px solid #000; }
.gap td, .gap td:first-child { height: 4px; padding: 0; border-right: 0; border-left: 0; }
.n { text-align: right; padding-right: 3px; }
.y { background: var(--cream); }
.y .field, .y .opt { --hi: #cccca0; --lo: #99997a; }
.y .opt { margin-left: 3px; }
.wh { background: #fff; }
.wh .field { --hi: #c8c8c8; --lo: #999; }
td .field, td .opt { height: 27px; }
.act { box-shadow: inset 0 0 0 2px #000; }
.act .field::before {
  background:
    linear-gradient(#000, #000) 2px 0 / 1px 100% no-repeat,
    linear-gradient(#000, #000) 0 0 / 5px 1px no-repeat,
    linear-gradient(#000, #000) 0 100% / 5px 1px no-repeat;
}
.sym { display: block; width: 20px; height: 20px; margin-left: 1px; overflow: visible; }
.sym use { width: 20px; height: 20px; }
.sym text { font: 8px/8px var(--mono); }
.tl { width: 62px; height: 27px; display: block; text-align: left; padding-left: 2px; border: 2px solid; border-color: var(--teal-hi) var(--teal-lo) var(--teal-lo) var(--teal-hi); }
.tl.on { background: var(--orange); }

.scroll { display: flex; height: 15px; margin: 3px 1px 4px; background: #42ae94; border: 2px solid; border-color: var(--teal-lo) var(--teal-hi) var(--teal-hi) var(--teal-lo); }
.scroll svg { width: 12px; height: 11px; }
.thumb { flex: 680; background: var(--teal); border: 1px solid; border-color: var(--teal-hi) var(--teal-lo) var(--teal-lo) var(--teal-hi); }
.trough { flex: 53; }
.nav { height: 35px; border: 1px solid #000; }
.cur { width: 40px; background: var(--orange); border: 1px solid #000; font-size: 12px; line-height: 30px; padding-left: 2px; margin-right: 2px; }
.nav .box { padding: 2px 1px; }
.nav .bv { padding: 0 3px; }
.nav .arr { padding: 0; }
.idx { line-height: 32px; padding: 0 4px 0 2px; }
.nav .idxf { flex: 0 0 61px; padding: 1px 0; margin-right: 1px; --hi: var(--teal-hi); --lo: var(--teal-lo); }
.ib { width: 30px; }
.nav .ib .bv { padding: 0; display: grid; place-items: center; }
.ib svg { width: 16px; height: 16px; }
.nav .w-ml { width: 88px; padding: 2px 2px 2px 6px; }
.nav .w-reg { width: 114px; padding: 2px 2px 2px 6px; }
.mrg { height: 34px; margin-top: 3px; border: 1px solid #000; }
.comb { width: 125px; }
.w-mt { width: 360px; padding-left: 10px; gap: 19px; align-items: center; }
.w-mt .opt { align-self: stretch; }
.mb { display: flex; padding: 2px; }
.mb .bv { width: 55px; }
.acts .box { flex: 1; height: 30px; }
```
